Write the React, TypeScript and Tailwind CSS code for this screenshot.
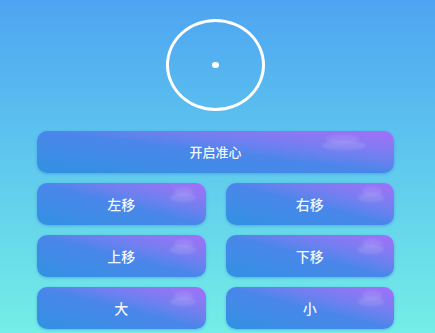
import React from 'react';

const font = { fontFamily: '"Noto Sans CJK SC", "Noto Sans", sans-serif' };

function Cloud({ big }: { big?: boolean }) {
  return (
    <div className={`pointer-events-none absolute top-[4px] ${big ? 'right-[28px] w-[44px]' : 'right-[10px] w-[26px]'}`}>
      <div className="ml-[4px] h-[9px] w-3/4 rounded-[50%] bg-white/10 blur-[1.5px]" />
      <div className="-mt-[3px] h-[9px] w-full rounded-[50%] bg-white/12 blur-[1.5px]" />
    </div>
  );
}

function Btn({ label, big }: { label: string; big?: boolean }) {
  return (
    <button
      className="relative flex h-[42px] items-center justify-center overflow-hidden rounded-[10px] bg-gradient-to-tr from-[#2f92e2] via-[#4a86ea] to-[#a36ef9] text-[14px] font-medium text-white/95 shadow-[0_1px_3px_rgba(40,90,200,0.35)]"
      style={font}
    >
      <Cloud big={big} />
      <span className={big ? 'text-[13px]' : ''}>{label}</span>
    </button>
  );
}

export default function App() {
  return (
    <div className="h-[333px] w-[435px] overflow-hidden bg-gradient-to-b from-[#4fa4f1] to-[#74eee6] pl-[37px] pr-[41px]">
      <div className="flex justify-center pt-[19px]">
        <div className="flex h-[92px] w-[99px] items-center justify-center rounded-[50%] border-[3.5px] border-white">
          <div className="h-[6px] w-[7px] rounded-full bg-white" />
        </div>
      </div>
      <div className="mt-[20px] flex flex-col gap-[10px]">
        <div className="grid">
          <Btn label="开启准心" big />
        </div>
        <div className="grid grid-cols-2 gap-x-[20px] gap-y-[10px]">
          <Btn label="左移" />
          <Btn label="右移" />
          <Btn label="上移" />
          <Btn label="下移" />
          <Btn label="大" />
          <Btn label="小" />
        </div>
      </div>
    </div>
  );
}
